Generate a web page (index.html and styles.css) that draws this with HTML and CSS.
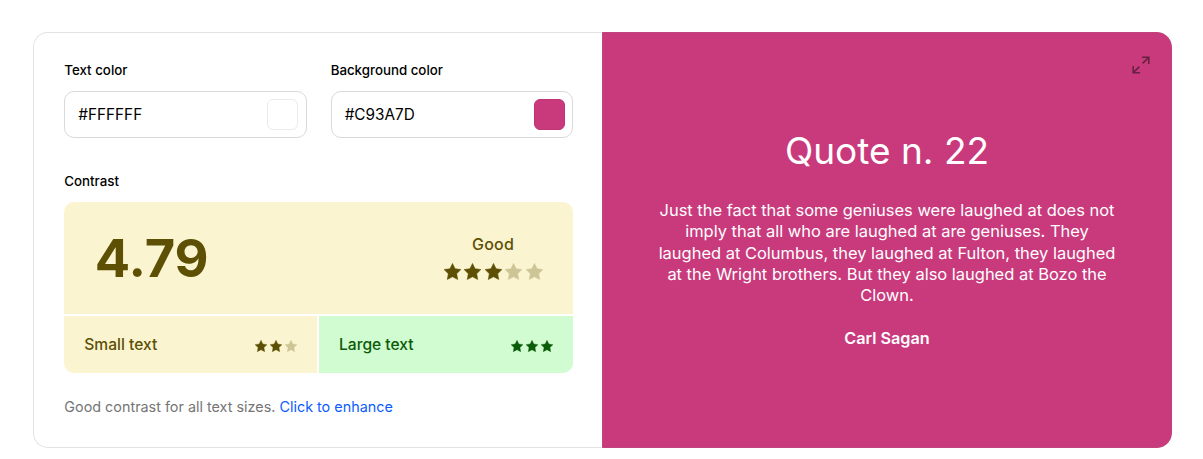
FILE: index.html
```html
<!DOCTYPE html>
<html lang="en">
<head>
<meta charset="utf-8">
<title>Color contrast checker</title>
<link rel="stylesheet" href="styles.css">
</head>
<body>
<svg class="defs" width="0" height="0" aria-hidden="true">
  <symbol id="star" viewBox="0 0 24 24"><path d="M12 .6l3.65 7.5 8.2 1.15-5.95 5.75 1.45 8.25L12 19.35 4.65 23.25 6.1 15 .15 9.25l8.2-1.15z" stroke="currentColor" stroke-width=".8" stroke-linejoin="round"/></symbol>
</svg>
<main class="card">
  <section class="panel">
    <div class="fields">
      <div class="field">
        <div class="label">Text color</div>
        <div class="input"><span>#FFFFFF</span><i class="swatch swatch-white"></i></div>
      </div>
      <div class="field">
        <div class="label">Background color</div>
        <div class="input"><span>#C93A7D</span><i class="swatch swatch-pink"></i></div>
      </div>
    </div>
    <div class="label">Contrast</div>
    <div class="result">
      <div class="score">
        <div class="number">4.79</div>
        <div class="rating">
          <div class="verdict">Good</div>
          <div class="stars stars-lg"><svg><use href="#star"/></svg><svg><use href="#star"/></svg><svg><use href="#star"/></svg><svg class="off"><use href="#star"/></svg><svg class="off"><use href="#star"/></svg></div>
        </div>
      </div>
      <div class="sizes">
        <div class="size"><span>Small text</span><div class="stars"><svg><use href="#star"/></svg><svg><use href="#star"/></svg><svg class="off"><use href="#star"/></svg></div></div>
        <div class="size size-good"><span>Large text</span><div class="stars"><svg><use href="#star"/></svg><svg><use href="#star"/></svg><svg><use href="#star"/></svg></div></div>
      </div>
    </div>
    <p class="note">Good contrast for all text sizes. <a class="link" href="#">Click to enhance</a></p>
  </section>
  <section class="preview">
    <svg class="expand" viewBox="0 0 18 18"><path d="M10 1.2h6.8V8M16.8 1.2l-6.2 6.2M1.2 10v6.8H8M1.2 16.8l6.2-6.2"/></svg>
    <h1 class="title">Quote n. 22</h1>
    <p class="quote">Just the fact that some geniuses were laughed at does not imply that all who are laughed at are geniuses. They laughed at Columbus, they laughed at Fulton, they laughed at the Wright brothers. But they also laughed at Bozo the Clown.</p>
    <p class="author">Carl Sagan</p>
  </section>
</main>
</body>
</html>
```

FILE: styles.css
```css
* { box-sizing: border-box; }
body {
  margin: 0;
  padding: 32px 31px 11px 33px;
  background: #fff;
  color: #000;
  font-family: Inter, "Liberation Sans", sans-serif;
}
.defs { display: block; position: absolute; }
.card {
  display: flex;
  height: 416px;
  border: 1px solid #e3e3e3;
  border-right: 0;
  border-radius: 15px;
}
.panel { width: 568px; padding: 28px 29px 0 30.3px; }
.fields { display: flex; gap: 24px; margin-bottom: 34px; }
.field { flex: 1; }
.label { font-size: 13.3px; font-weight: 500; line-height: 18px; }
.input {
  display: flex;
  align-items: center;
  justify-content: space-between;
  height: 47px;
  margin-top: 12px;
  padding: 0 7.5px 0 13px;
  border: 1px solid #d9d9d9;
  border-radius: 10px;
  font-size: 15.3px;
}
.swatch { width: 31px; height: 31px; border-radius: 6px; }
.swatch-white { border: 1px solid #ebebeb; }
.swatch-pink { background: #c93a7d; border: 1px solid #bf3375; }
.result {
  margin-top: 12px;
  border-radius: 10px;
  overflow: hidden;
  color: #5d5005;
}
.score {
  display: flex;
  align-items: center;
  justify-content: space-between;
  height: 112px;
  padding: 0 30.5px 0 30.5px;
  background: #fbf4d0;
}
.number { font-size: 52.4px; font-weight: 700; line-height: 60px; }
.rating { padding-bottom: 3px; text-align: center; }
.verdict { font-size: 16px; font-weight: 500; line-height: 20px; letter-spacing: .2px; }
.stars { display: flex; gap: 3px; padding-top: 2px; fill: currentColor; }
.stars svg { width: 12px; height: 12px; }
.stars-lg { gap: 3.5px; padding-top: 9px; }
.stars-lg svg { width: 17px; height: 17px; }
.stars .off { opacity: .28; }
.sizes { display: flex; gap: 2px; margin-top: 2px; }
.size {
  display: flex;
  flex: 1;
  align-items: center;
  justify-content: space-between;
  height: 57px;
  padding: 0 20px;
  background: #fbf4d0;
  font-size: 15.6px;
  font-weight: 500;
}
.size:first-child { flex: none; width: 252.7px; }
.size-good { background: #d1fbd0; color: #0b5c08; }
.note { margin: 24px 0 0; color: #757575; font-size: 14.38px; line-height: 20px; }
.link { color: #0b5cff; text-decoration: none; }
.preview {
  position: relative;
  flex: 1;
  height: 416px;
  margin-top: -1px;
  padding: 93px 53.5px 0;
  border: 1px solid #c1447f;
  border-radius: 0 15px 15px 0;
  background: #c93a7d;
  color: #fff;
  text-align: center;
}
.expand {
  position: absolute;
  top: 23px;
  right: 21px;
  width: 18px;
  height: 18px;
  fill: none;
  stroke: #64203f;
  stroke-width: 1.5;
}
.title { margin: 0; font-size: 37px; font-weight: 400; line-height: 50px; }
.quote { margin: 24px 0 0; font-size: 16.47px; line-height: 21.25px; }
.author { margin: 21.5px 0 0; font-size: 16.2px; font-weight: 600; line-height: 21.3px; }
```
